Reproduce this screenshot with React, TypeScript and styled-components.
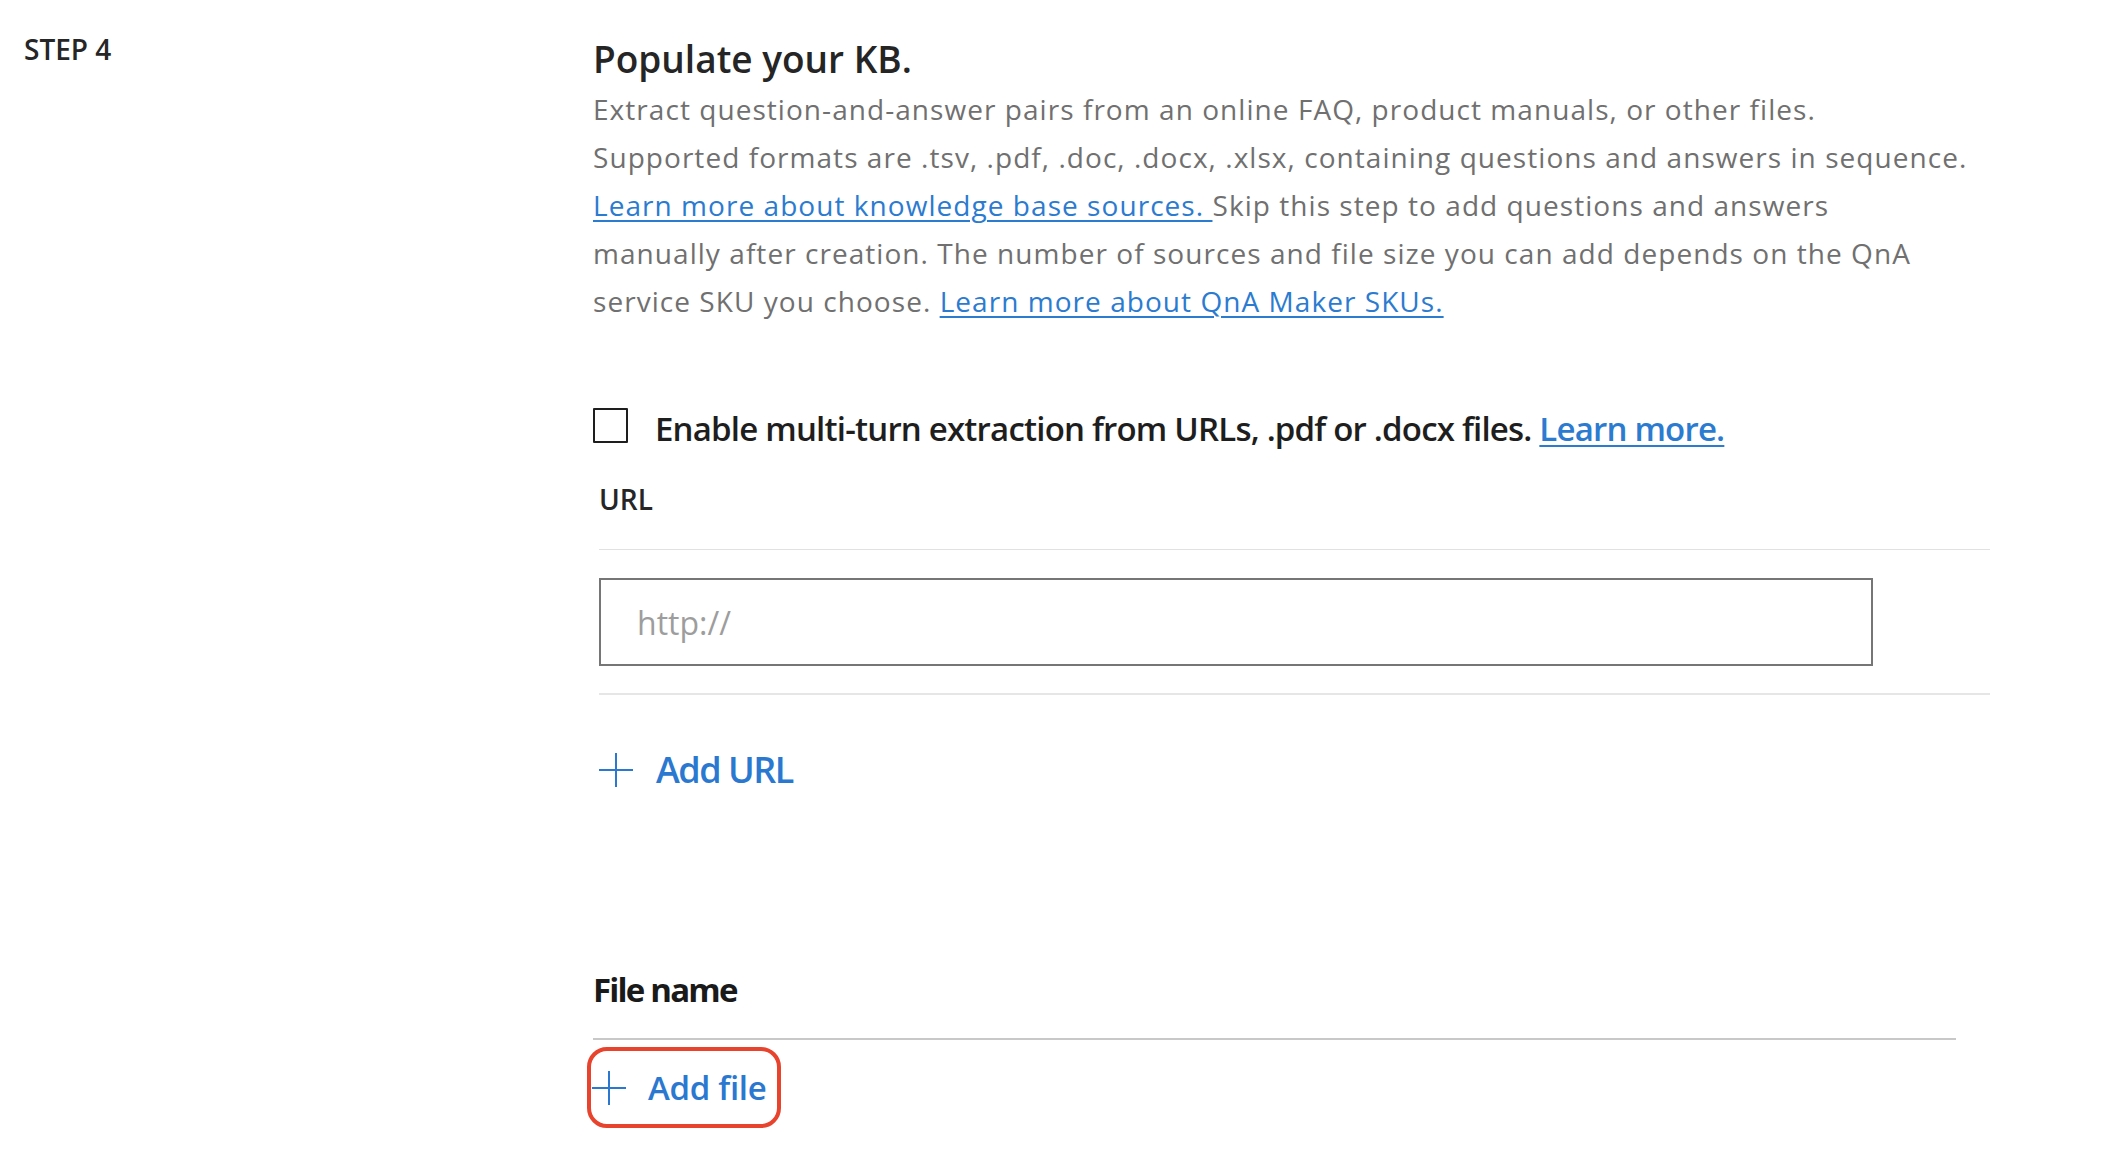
import React from 'react';
import styled, { createGlobalStyle } from 'styled-components';

const GlobalStyle = createGlobalStyle`
  html, body {
    margin: 0;
    padding: 0;
    background: #ffffff;
  }

  body {
    font-family: 'Open Sans', 'Noto Sans', sans-serif;
    color: #1e1e1e;
  }
`;

function PlusIcon() {
  return (
    <svg width="34" height="34" viewBox="0 0 34 34" fill="none">
      <line x1="17" y1="0" x2="17" y2="34" stroke="currentColor" strokeWidth="2" />
      <line x1="0" y1="17" x2="34" y2="17" stroke="currentColor" strokeWidth="2" />
    </svg>
  );
}

export default function App() {
  return (
    <>
      <GlobalStyle />
      <Page>
        <StepColumn>
          <StepLabel>STEP 4</StepLabel>
        </StepColumn>

        <Main>
          <Heading>Populate your KB.</Heading>
          <Description>
            Extract question-and-answer pairs from an online FAQ, product manuals, or other files.
            <br />
            Supported formats are .tsv, .pdf, .doc, .docx, .xlsx, containing questions and answers in sequence.
            <br />
            <Link href="#">Learn more about knowledge base sources. </Link>
            Skip this step to add questions and answers
            <br />
            manually after creation. The number of sources and file size you can add depends on the QnA
            <br />
            service SKU you choose. <Link href="#">Learn more about QnA Maker SKUs.</Link>
          </Description>

          <CheckRow>
            <CheckBox type="checkbox" />
            <CheckLabel>
              Enable multi-turn extraction from URLs, .pdf or .docx files.{' '}
              <Link href="#">Learn more.</Link>
            </CheckLabel>
          </CheckRow>

          <UrlSection>
            <FieldLabel>URL</FieldLabel>
            <UrlRow>
              <UrlInput placeholder="http://" />
            </UrlRow>
          </UrlSection>

          <AddButton>
            <PlusIcon />
            <span>Add URL</span>
          </AddButton>

          <FileSection>
            <FileHeader>File name</FileHeader>
            <AddFileButton>
              <PlusIcon />
              <span>Add file</span>
            </AddFileButton>
          </FileSection>
        </Main>
      </Page>
    </>
  );
}

const Page = styled.div`
  display: flex;
  align-items: flex-start;
  width: 2118px;
  min-height: 1154px;
  box-sizing: border-box;
  padding: 31px 0 0 24px;
`;

const StepColumn = styled.div`
  width: 569px;
  flex-shrink: 0;
`;

const StepLabel = styled.div`
  font-size: 28px;
  line-height: 36px;
  font-weight: 600;
  color: #262626;
`;

const Main = styled.div`
  display: flex;
  flex-direction: column;
  width: 1400px;
  padding-top: 4px;
`;

const Heading = styled.h1`
  margin: 0;
  font-size: 37px;
  line-height: 48px;
  font-weight: 600;
  color: #252525;
`;

const Description = styled.p`
  margin: 2px 0 0;
  font-size: 28px;
  line-height: 48px;
  letter-spacing: 1.05px;
  color: #707070;
  white-space: nowrap;
`;

const Link = styled.a`
  color: #2b7bd0;
  text-decoration: underline;
  text-underline-offset: 4px;
  text-decoration-thickness: 2px;
`;

const CheckRow = styled.label`
  display: flex;
  align-items: flex-start;
  gap: 27px;
  margin-top: 82px;
`;

const CheckBox = styled.input`
  appearance: none;
  width: 35px;
  height: 35px;
  margin: 1px 0 0;
  flex-shrink: 0;
  box-sizing: border-box;
  border: 2px solid #1e1e1e;
  border-radius: 1px;
  background: #ffffff;
`;

const CheckLabel = styled.span`
  font-size: 33px;
  line-height: 44px;
  font-weight: 600;
  letter-spacing: -0.8px;
  color: #1e1e1e;
  white-space: nowrap;
`;

const UrlSection = styled.div`
  display: flex;
  flex-direction: column;
  width: 1391px;
  margin: 30px 0 0 6px;
`;

const FieldLabel = styled.div`
  font-size: 28px;
  line-height: 36px;
  font-weight: 600;
  color: #262626;
  padding-bottom: 32px;
  border-bottom: 1px solid #e1e1e1;
`;

const UrlRow = styled.div`
  padding: 28px 0 27px;
  border-bottom: 2px solid #e6e6e6;
`;

const UrlInput = styled.input`
  display: block;
  width: 1274px;
  height: 88px;
  box-sizing: border-box;
  border: 2px solid #767676;
  padding: 0 0 0 36px;
  font-family: 'Open Sans', sans-serif;
  font-size: 32px;
  color: #333333;
  outline: none;

  &::placeholder {
    color: #9d9d9d;
  }
`;

const AddButton = styled.button`
  display: flex;
  align-items: center;
  gap: 23px;
  align-self: flex-start;
  margin: 51px 0 0 6px;
  padding: 0;
  border: none;
  background: none;
  color: #2b78d0;
  font-family: 'Open Sans', sans-serif;
  font-size: 36px;
  line-height: 48px;
  font-weight: 600;
  letter-spacing: -1.5px;
  cursor: pointer;
`;

const FileSection = styled.div`
  display: flex;
  flex-direction: column;
  width: 1363px;
  margin-top: 174px;
`;

const FileHeader = styled.div`
  font-size: 33px;
  line-height: 44px;
  font-weight: 700;
  letter-spacing: -1.8px;
  color: #1a1a1a;
  padding-bottom: 26px;
  border-bottom: 2px solid #c8c8c8;
`;

const AddFileButton = styled.button`
  display: flex;
  align-items: center;
  gap: 22px;
  align-self: flex-start;
  height: 81px;
  margin: 7px 0 0 -6px;
  padding: 0 11px 0 1px;
  box-sizing: border-box;
  border: 4px solid #e8432d;
  border-radius: 20px;
  background: none;
  color: #2b78d0;
  font-family: 'Open Sans', sans-serif;
  font-size: 33px;
  line-height: 44px;
  font-weight: 600;
  letter-spacing: -0.3px;
  cursor: pointer;
`;
